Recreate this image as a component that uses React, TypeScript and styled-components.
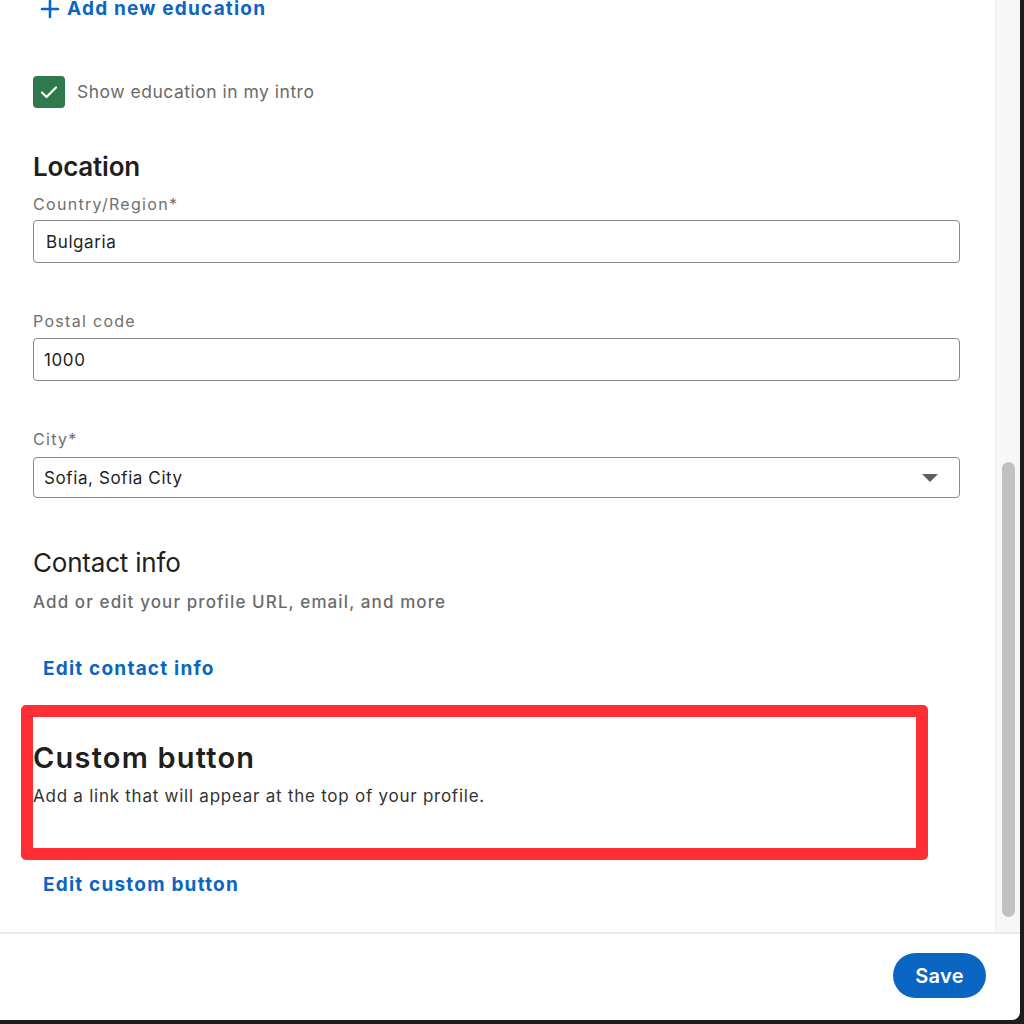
import React from 'react'
import styled, { createGlobalStyle } from 'styled-components'

const GlobalStyle = createGlobalStyle`
  html, body {
    margin: 0;
    padding: 0;
    background: #1c1c1c;
  }
  body {
    font-family: Inter, "Noto Sans", "Liberation Sans", sans-serif;
    -webkit-font-smoothing: antialiased;
  }
`

const Page = styled.div`
  width: 1024px;
  height: 1024px;
  overflow: hidden;
`

const Modal = styled.div`
  width: 1020px;
  height: 1020px;
  background: #ffffff;
  border-bottom-right-radius: 8px;
  display: flex;
  flex-direction: column;
  overflow: hidden;
`

const ScrollArea = styled.div`
  flex: 1;
  display: flex;
  min-height: 0;
`

const Content = styled.div`
  flex: 1;
  padding: 0 35px 0 33px;
  display: flex;
  flex-direction: column;
  position: relative;
`

const Track = styled.div`
  width: 24px;
  background: #f7f7f7;
  border-left: 1px solid #ececec;
  display: flex;
  justify-content: center;
`

const Thumb = styled.div`
  width: 13px;
  background: #c1c1c1;
  border-radius: 7px;
`

const LinkButton = styled.a<{ $mt: number; $indent?: number }>`
  display: inline-flex;
  align-items: center;
  gap: 7px;
  align-self: flex-start;
  margin-top: ${({ $mt }) => $mt}px;
  margin-left: ${({ $indent }) => $indent ?? 10}px;
  color: #0a66c2;
  font-size: 19px;
  font-weight: 700;
  line-height: 24px;
  letter-spacing: 1.2px;
  text-decoration: none;
`

const CheckRow = styled.label`
  display: flex;
  align-items: center;
  gap: 12px;
  margin-top: 55px;
  color: #6b6b6b;
  font-size: 17.5px;
  line-height: 32px;
  letter-spacing: 0.5px;
`

const CheckBox = styled.span`
  width: 32px;
  height: 32px;
  border-radius: 4px;
  background: #2f7a4d;
  display: flex;
  align-items: center;
  justify-content: center;
`

const SectionTitle = styled.h2<{ $mt: number; $bold?: boolean; $size?: number; $track?: number }>`
  margin: ${({ $mt }) => $mt}px 0 0;
  font-size: ${({ $size }) => $size ?? 26}px;
  line-height: ${({ $size }) => ($size ?? 26) + 6}px;
  font-weight: ${({ $bold }) => ($bold ? 600 : 400)};
  color: #1f1f1f;
  letter-spacing: ${({ $track }) => $track ?? -0.2}px;
`

const FieldLabel = styled.div<{ $mt: number }>`
  margin-top: ${({ $mt }) => $mt}px;
  color: #6f6f6f;
  font-size: 16px;
  line-height: 20px;
  letter-spacing: 1.3px;
`

const InputBox = styled.div<{ $mt: number; $h: number; $pad?: number }>`
  margin-top: ${({ $mt }) => $mt}px;
  height: ${({ $h }) => $h}px;
  box-sizing: border-box;
  border: 1.5px solid #8a8a8a;
  border-radius: 4px;
  display: flex;
  align-items: center;
  justify-content: space-between;
  padding: 0 21px 0 ${({ $pad }) => $pad ?? 12}px;
  color: #1f1f1f;
  font-size: 17px;
  letter-spacing: 0.6px;
`

const Caret = styled.span`
  width: 0;
  height: 0;
  border-left: 8px solid transparent;
  border-right: 8px solid transparent;
  border-top: 8px solid #5f5f5f;
`

const Hint = styled.p<{ $mt: number; $weight?: number; $color?: string; $track?: number }>`
  margin: ${({ $mt }) => $mt}px 0 0;
  font-size: 17px;
  line-height: 22px;
  font-weight: ${({ $weight }) => $weight ?? 400};
  color: ${({ $color }) => $color ?? '#6b6b6b'};
  letter-spacing: ${({ $track }) => $track ?? 0.75}px;
`

// red annotation drawn over the screenshot
const HighlightFrame = styled.div`
  position: absolute;
  left: 21px;
  top: 705px;
  width: 907px;
  height: 155px;
  box-sizing: border-box;
  border: 12px solid #ff2e32;
  border-radius: 5px;
  pointer-events: none;
`

const Footer = styled.div`
  height: 88px;
  box-sizing: border-box;
  border-top: 2px solid #e9e9e9;
  display: flex;
  justify-content: flex-end;
  align-items: flex-start;
  padding: 19px 34px 0 0;
`

const SaveButton = styled.button`
  width: 93px;
  height: 45px;
  border: none;
  border-radius: 23px;
  background: #0a66c2;
  color: #ffffff;
  font-family: inherit;
  font-size: 20px;
  font-weight: 600;
  letter-spacing: 0.3px;
`

const scroll = { top: 462, height: 455 }

export default function App() {
  return (
    <Page>
      <GlobalStyle />
      <Modal>
        <ScrollArea>
          <Content>
            <LinkButton $mt={-3} $indent={7}>
              <svg width="20" height="20" viewBox="0 0 20 20">
                <path d="M10 2v16M2 10h16" stroke="#0a66c2" strokeWidth="2.6" strokeLinecap="round" />
              </svg>
              Add new education
            </LinkButton>

            <CheckRow>
              <CheckBox>
                <svg width="22" height="22" viewBox="0 0 22 22">
                  <path d="M4 11.5l4.5 4.5L18 6.5" fill="none" stroke="#fff" strokeWidth="2.2" strokeLinecap="round" strokeLinejoin="round" />
                </svg>
              </CheckBox>
              Show education in my intro
            </CheckRow>

            <SectionTitle $mt={43} $bold>Location</SectionTitle>
            <FieldLabel $mt={11}>Country/Region*</FieldLabel>
            <InputBox $mt={6} $h={43}>Bulgaria</InputBox>

            <FieldLabel $mt={48}>Postal code</FieldLabel>
            <InputBox $mt={7} $h={43} $pad={10}>1000</InputBox>

            <FieldLabel $mt={48}>City*</FieldLabel>
            <InputBox $mt={8} $h={41} $pad={10}>
              Sofia, Sofia City
              <Caret />
            </InputBox>

            <SectionTitle $mt={49}>Contact info</SectionTitle>
            <Hint $mt={12} $weight={500} $track={1.1}>Add or edit your profile URL, email, and more</Hint>
            <LinkButton $mt={44}>Edit contact info</LinkButton>

            <SectionTitle $mt={59} $bold $size={29} $track={1.2}>Custom button</SectionTitle>
            <Hint $mt={10} $color="#333333">Add a link that will appear at the top of your profile.</Hint>
            <LinkButton $mt={66}>Edit custom button</LinkButton>

            <HighlightFrame />
          </Content>
          <Track>
            <Thumb style={{ marginTop: scroll.top, height: scroll.height }} />
          </Track>
        </ScrollArea>
        <Footer>
          <SaveButton>Save</SaveButton>
        </Footer>
      </Modal>
    </Page>
  )
}
